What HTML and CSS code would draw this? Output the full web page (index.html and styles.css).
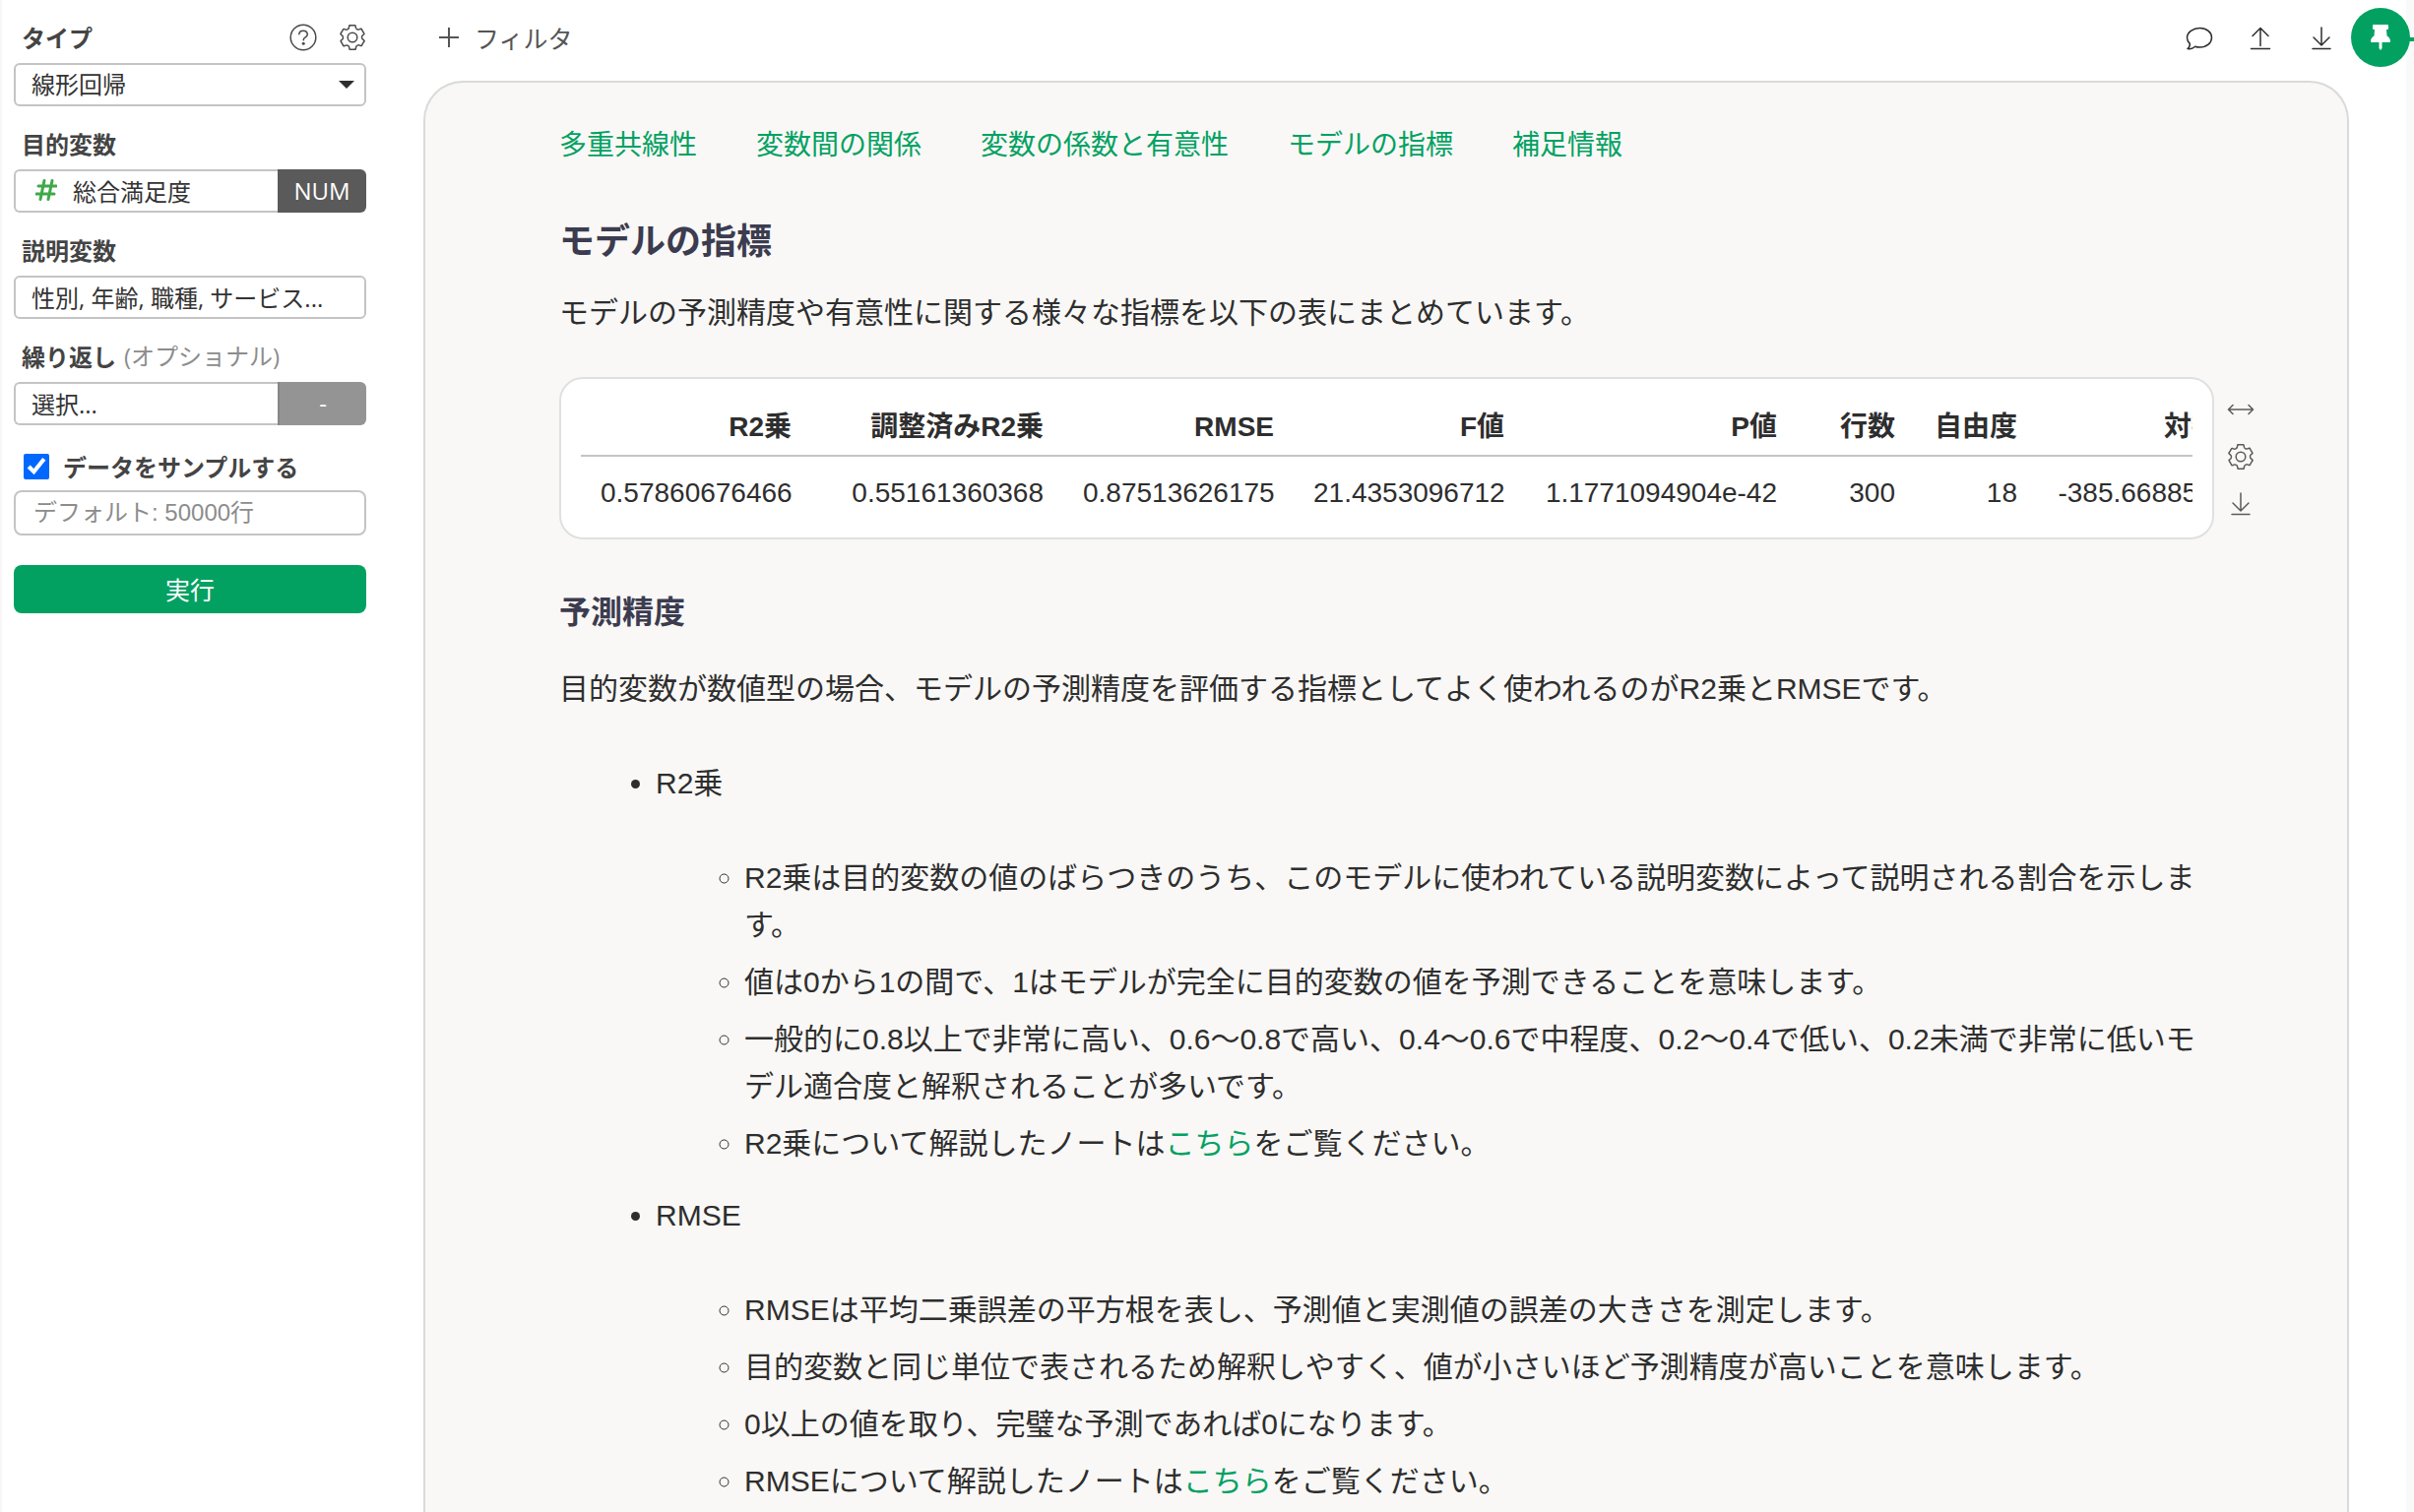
FILE: index.html
```html
<!DOCTYPE html>
<html lang="ja">
<head>
  <meta charset="UTF-8">
  <meta name="viewport" content="width=device-width, initial-scale=1.0">
  <title>線形回帰</title>
  <link rel="stylesheet" href="styles.css">
</head>
<body>
  <!-- shared icons -->
  <svg class="sprite" aria-hidden="true">
    <defs>
      <path id="tooth" d="M-2.6-12.2H2.6Q3-12.2 3.1-11.6L3.4-9.8Q3.6-8.9 4.5-8.4Q5.6-7.7 6.9-8.1L8.5-8.7Q9-8.8 9.3-8.3"/>
      <symbol id="gear" viewBox="-14 -14 28 28">
        <use href="#tooth"/>
        <use href="#tooth" transform="rotate(60)"/>
        <use href="#tooth" transform="rotate(120)"/>
        <use href="#tooth" transform="rotate(180)"/>
        <use href="#tooth" transform="rotate(240)"/>
        <use href="#tooth" transform="rotate(300)"/>
        <circle r="4.8"/>
      </symbol>
      <symbol id="download" viewBox="0 0 28 28">
        <path d="M14 3v18M6 13l8 8 8-8M5 24.5h18"/>
      </symbol>
    </defs>
  </svg>

  <div class="app">
    <aside class="sidebar">
      <div class="field">
        <div class="field-head">
          <label for="type">タイプ</label>
          <div class="head-tools">
            <button class="icon-btn" type="button" aria-label="ヘルプ">
              <svg class="icon" viewBox="0 0 28 28"><circle cx="14" cy="14" r="12.8"/><path d="M9.8 10.8Q10 7.2 14 7.2T18.3 10.8Q18.3 12.7 16.2 13.9Q14.2 15 14.2 16.8"/><circle class="dot" cx="14.2" cy="20.3" r="1.5"/></svg>
            </button>
            <button class="icon-btn" type="button" aria-label="設定">
              <svg class="icon"><use href="#gear"/></svg>
            </button>
          </div>
        </div>
        <div class="select-wrap">
          <select class="box" id="type">
            <option>線形回帰</option>
          </select>
          <svg class="caret" viewBox="0 0 16 8"><path d="M0 0h16L8 8z"/></svg>
        </div>
      </div>

      <div class="field">
        <div class="field-head"><label for="target">目的変数</label></div>
        <div class="input-group">
          <button class="box" id="target" type="button">
            <svg class="hash" viewBox="0 0 22 22"><path d="M9 1.5L5 20.5M17 1.5L13 20.5M3 7h18M1 15h18"/></svg>総合満足度
          </button>
          <button class="addon" type="button">NUM</button>
        </div>
      </div>

      <div class="field">
        <div class="field-head"><label for="predictors">説明変数</label></div>
        <button class="box" id="predictors" type="button">性別, 年齢, 職種, サービス...</button>
      </div>

      <div class="field">
        <div class="field-head"><label for="repeat">繰り返し</label> <span class="optional">(オプショナル)</span></div>
        <div class="input-group">
          <button class="box" id="repeat" type="button">選択...</button>
          <button class="addon muted" type="button">-</button>
        </div>
      </div>

      <div class="sample">
        <input type="checkbox" id="sample" checked>
        <label for="sample">データをサンプルする</label>
      </div>
      <input class="box sample-size" type="text" placeholder="デフォルト: 50000行" aria-label="サンプル行数">

      <button class="run" type="button">実行</button>
    </aside>

    <main class="main">
      <div class="toolbar">
        <button class="filter" type="button">
          <svg viewBox="0 0 20 20"><path d="M10 0v20M0 10h20"/></svg>フィルタ
        </button>
        <div class="toolbar-icons">
          <button class="icon-btn" type="button" aria-label="コメント">
            <svg class="icon" viewBox="0 0 28 28"><path d="M14.500 3.500C21.500 3.500 26.500 7.800 26.500 13.200S21.500 23 14.500 23C12.800 23 11.200 22.800 9.800 22.200C7.800 23.900 5.200 25.200 2 24.600C3.800 23.200 4.500 21.300 4.300 19.400C2.600 17.700 1.500 15.500 1.500 13.200C1.500 7.800 7.500 3.500 14.500 3.500Z"/></svg>
          </button>
          <button class="icon-btn" type="button" aria-label="アップロード">
            <svg class="icon" viewBox="0 0 28 28"><path d="M14 21.500v-18M6 11.500l8-8 8 8M4.500 24.500h19"/></svg>
          </button>
          <button class="icon-btn" type="button" aria-label="ダウンロード">
            <svg class="icon"><use href="#download"/></svg>
          </button>
        </div>
      </div>

      <article class="panel">
        <nav class="links">
          <a href="#">多重共線性</a>
          <a href="#">変数間の関係</a>
          <a href="#">変数の係数と有意性</a>
          <a href="#">モデルの指標</a>
          <a href="#">補足情報</a>
        </nav>

        <h2>モデルの指標</h2>
        <p>モデルの予測精度や有意性に関する様々な指標を以下の表にまとめています。</p>

        <div class="table-row">
          <div class="card">
            <div class="table-scroll">
              <table>
                <colgroup>
                  <col class="w-value"><col class="w-adjusted"><col class="w-value"><col class="w-value">
                  <col class="w-pvalue"><col class="w-rows"><col class="w-freedom"><col class="w-likelihood">
                </colgroup>
                <thead>
                  <tr><th>R2乗</th><th>調整済みR2乗</th><th>RMSE</th><th>F値</th><th>P値</th><th>行数</th><th>自由度</th><th>対数尤度</th></tr>
                </thead>
                <tbody>
                  <tr><td>0.57860676466</td><td>0.55161360368</td><td>0.87513626175</td><td>21.4353096712</td><td>1.1771094904e-42</td><td>300</td><td>18</td><td>-385.6688541927</td></tr>
                </tbody>
              </table>
            </div>
          </div>
          <div class="table-tools">
            <button class="icon-btn" type="button" aria-label="幅を広げる">
              <svg class="icon" viewBox="0 0 28 28"><path d="M2 14h24M6 9.500l-4.500 4.500 4.500 4.500M22 9.500l4.500 4.500-4.500 4.500"/></svg>
            </button>
            <button class="icon-btn" type="button" aria-label="表の設定">
              <svg class="icon"><use href="#gear"/></svg>
            </button>
            <button class="icon-btn" type="button" aria-label="表をダウンロード">
              <svg class="icon"><use href="#download"/></svg>
            </button>
          </div>
        </div>

        <h3>予測精度</h3>
        <p>目的変数が数値型の場合、モデルの予測精度を評価する指標としてよく使われるのがR2乗とRMSEです。</p>

        <ul class="notes">
          <li>R2乗
            <ul>
              <li>R2乗は目的変数の値のばらつきのうち、このモデルに使われている説明変数によって説明される割合を示します。</li>
              <li>値は0から1の間で、1はモデルが完全に目的変数の値を予測できることを意味します。</li>
              <li>一般的に0.8以上で非常に高い、0.6〜0.8で高い、0.4〜0.6で中程度、0.2〜0.4で低い、0.2未満で非常に低いモデル適合度と解釈されることが多いです。</li>
              <li>R2乗について解説したノートは<a href="#">こちら</a>をご覧ください。</li>
            </ul>
          </li>
          <li>RMSE
            <ul>
              <li>RMSEは平均二乗誤差の平方根を表し、予測値と実測値の誤差の大きさを測定します。</li>
              <li>目的変数と同じ単位で表されるため解釈しやすく、値が小さいほど予測精度が高いことを意味します。</li>
              <li>0以上の値を取り、完璧な予測であれば0になります。</li>
              <li>RMSEについて解説したノートは<a href="#">こちら</a>をご覧ください。</li>
            </ul>
          </li>
        </ul>
      </article>
    </main>

    <div class="rail">
      <button class="pin" type="button" aria-label="ピン留め">
        <svg viewBox="0 0 20 26"><path d="M3 0h14q1 0 1 1v3q0 1-1 1h-1l.5 6.500Q20 13.500 20 17q0 1-1 1h-7.500v6L10 26l-1.500-2v-6H1q-1 0-1-1 0-3.500 3.500-5.500L4 5H3Q2 5 2 4V1q0-1 1-1z"/></svg>
      </button>
    </div>
  </div>
</body>
</html>
```

FILE: styles.css
```css
* {
  box-sizing: border-box;
}

body {
  margin: 0;
  font-family: "Liberation Sans", "Noto Sans CJK JP", sans-serif;
  font-size: 30px;
  line-height: 48px;
  color: #2e2e2e;
  background-color: #fff;
}

button,
input,
select {
  font-family: inherit;
  font-size: 24px;
  color: inherit;
}

button {
  padding: 0;
  border: none;
  background: none;
  cursor: pointer;
}

a {
  color: #02a162;
  text-decoration: none;
}

.sprite {
  position: absolute;
  width: 0;
  height: 0;
}

.app {
  display: flex;
  height: 100vh;
  overflow: hidden;
}

.icon {
  display: block;
  width: 28px;
  height: 28px;
  fill: none;
  stroke: currentColor;
  stroke-width: 1.5;
  stroke-linecap: round;
  stroke-linejoin: round;
}

.icon .dot {
  fill: currentColor;
  stroke: none;
}

/* sidebar */
.sidebar {
  flex: none;
  width: 386px;
  padding: 12px 14px 0 12px;
  border-left: 2px solid #f7f7f7;
  font-family: "Open Sans", "Noto Sans CJK JP", sans-serif;
  font-size: 24px;
  line-height: 32px;
  color: #333;
}

.field {
  margin-bottom: 12px;
}

.field-head {
  display: flex;
  align-items: center;
  gap: 8px;
  height: 52px;
  padding-left: 8px;
}

.field-head label,
.sample label {
  padding-top: 2px;
  font-weight: bold;
  color: #444;
}

.head-tools {
  display: flex;
  gap: 22px;
  margin-left: auto;
  color: #4a4a4a;
}

.optional {
  color: #8c8c8c;
}

.box {
  display: flex;
  align-items: center;
  width: 100%;
  height: 44px;
  padding: 0 16px 2px;
  border: 2px solid #c4c4c4;
  border-radius: 6px;
  background-color: #fff;
  text-align: left;
}

.select-wrap {
  position: relative;
}

.select-wrap select {
  appearance: none;
}

.caret {
  position: absolute;
  top: 18px;
  right: 12px;
  width: 16px;
  height: 8px;
  fill: #2e2e2e;
  pointer-events: none;
}

.input-group {
  display: flex;
}

.input-group .box {
  flex: 1;
  border-right: none;
  border-radius: 6px 0 0 6px;
}

.hash {
  width: 22px;
  height: 22px;
  margin: 0 16px 0 4px;
  fill: none;
  stroke: #3fa948;
  stroke-width: 3;
  stroke-linecap: round;
}

.addon {
  width: 90px;
  height: 44px;
  padding-bottom: 2px;
  border-radius: 0 6px 6px 0;
  background-color: #5a5a5a;
  color: #fff;
}

.addon.muted {
  border-left: 2px solid #868686;
  background-color: #949494;
}

.sample {
  display: flex;
  align-items: center;
  gap: 14px;
  height: 54px;
  padding: 6px 0 0 10px;
}

.sample input {
  width: 26px;
  height: 26px;
  margin: 0;
  accent-color: #0068ff;
}

.sample-size {
  height: 46px;
  border-radius: 8px;
  padding: 0 18px;
  font-family: "Liberation Sans", "Noto Sans CJK JP", sans-serif;
}

.sample-size::placeholder {
  color: #8c8c8c;
}

.run {
  width: 100%;
  height: 49px;
  margin-top: 30px;
  padding-bottom: 2px;
  border-radius: 8px;
  background-color: #02a162;
  color: #fff;
  font-size: 25px;
}

/* main area */
.main {
  flex: 1;
  display: flex;
  flex-direction: column;
  min-width: 0;
  padding: 0 58px 0 44px;
}

.toolbar {
  flex: none;
  display: flex;
  align-items: center;
  justify-content: space-between;
  height: 82px;
  padding: 0 14px 4px 16px;
}

.filter {
  display: flex;
  align-items: center;
  gap: 16px;
  padding-bottom: 2px;
  font-size: 25px;
  color: #555;
}

.filter svg {
  width: 20px;
  height: 20px;
  stroke: currentColor;
  stroke-width: 2;
}

.toolbar-icons {
  display: flex;
  gap: 34px;
  color: #2e2e2e;
}

.panel {
  flex: 1 0 auto;
  padding: 40px 136px 0;
  border: 2px solid #dadada;
  border-bottom: none;
  border-radius: 40px 40px 0 0;
  background-color: #f9f8f6;
}

.links {
  display: flex;
  gap: 60px;
  font-size: 28px;
}

h2,
h3,
p {
  margin: 0;
}

h2,
h3 {
  color: #3c3c50;
}

h2 {
  margin: 50px 0 24px;
  font-size: 36px;
}

h3 {
  margin: 50px 0 30px;
  font-size: 32px;
}

.table-row {
  display: flex;
  margin: 41px -42px 0 0;
}

.card {
  flex: 1;
  min-width: 0;
  padding: 20px 20px 24px;
  border: 2px solid #e0e0e0;
  border-radius: 24px;
  background-color: #fff;
}

.table-scroll {
  overflow: hidden;
}

table {
  width: 1740px;
  table-layout: fixed;
  border-collapse: collapse;
  font-size: 28px;
  line-height: 34px;
}

.w-value { width: 234px; }
.w-adjusted { width: 256px; }
.w-pvalue { width: 277px; }
.w-rows { width: 120px; }
.w-freedom { width: 124px; }
.w-likelihood { width: 261px; }

th,
td {
  padding: 0 20px;
  text-align: right;
  white-space: nowrap;
}

th {
  padding-top: 12px;
  padding-bottom: 11px;
  border-bottom: 2px solid #c4c4c4;
}

td {
  padding-top: 20px;
  padding-bottom: 4px;
}

.table-tools {
  display: flex;
  flex-direction: column;
  gap: 20px;
  padding: 19px 0 0 13px;
  color: #5a5a5a;
}

.notes,
.notes ul {
  margin: 0;
}

.notes {
  padding-left: 98px;
  margin-top: 48px;
}

.notes ul {
  padding-left: 90px;
  margin: 48px 0 25px;
}

.notes ul li + li {
  margin-top: 10px;
}

/* right rail with the pin over its edge */
.rail {
  position: relative;
  flex: none;
  width: 8px;
  background: linear-gradient(#02a162, #02a162) 0 38px / 8px 4px no-repeat #f9f9f9;
}

.pin {
  position: absolute;
  top: 8px;
  right: 4px;
  display: flex;
  align-items: center;
  justify-content: center;
  width: 60px;
  height: 60px;
  border-radius: 50%;
  background-color: #02a162;
}

.pin svg {
  width: 20px;
  height: 26px;
  fill: #fff;
}
```
